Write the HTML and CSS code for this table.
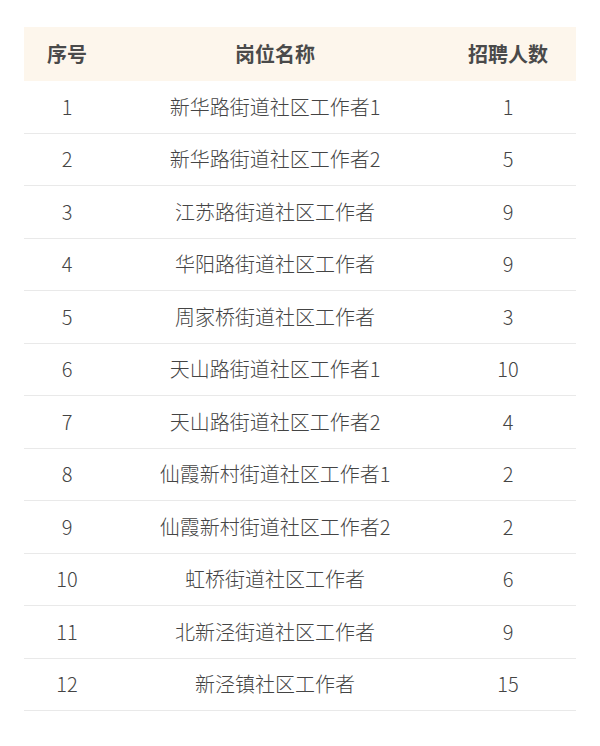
FILE: index.html
```html
<!DOCTYPE html>
<html lang="zh-CN">
<head>
<meta charset="utf-8">
<link rel="stylesheet" href="styles.css">
</head>
<body>
<table class="jobs">
  <colgroup>
    <col class="c-no">
    <col class="c-name">
    <col class="c-count">
  </colgroup>
  <thead>
    <tr><th>序号</th><th>岗位名称</th><th>招聘人数</th></tr>
  </thead>
  <tbody>
    <tr><td>1</td><td>新华路街道社区工作者1</td><td>1</td></tr>
    <tr><td>2</td><td>新华路街道社区工作者2</td><td>5</td></tr>
    <tr><td>3</td><td>江苏路街道社区工作者</td><td>9</td></tr>
    <tr><td>4</td><td>华阳路街道社区工作者</td><td>9</td></tr>
    <tr><td>5</td><td>周家桥街道社区工作者</td><td>3</td></tr>
    <tr><td>6</td><td>天山路街道社区工作者1</td><td>10</td></tr>
    <tr><td>7</td><td>天山路街道社区工作者2</td><td>4</td></tr>
    <tr><td>8</td><td>仙霞新村街道社区工作者1</td><td>2</td></tr>
    <tr><td>9</td><td>仙霞新村街道社区工作者2</td><td>2</td></tr>
    <tr><td>10</td><td>虹桥街道社区工作者</td><td>6</td></tr>
    <tr><td>11</td><td>北新泾街道社区工作者</td><td>9</td></tr>
    <tr><td>12</td><td>新泾镇社区工作者</td><td>15</td></tr>
  </tbody>
</table>
</body>
</html>
```
FILE: styles.css
```css
html, body {
  margin: 0;
  padding: 0;
  background: #ffffff;
}
body {
  padding: 27px 24px 0;
  font-family: "Noto Sans CJK SC", "Noto Sans", sans-serif;
  color: #444444;
}
.jobs {
  width: 552px;
  border-collapse: collapse;
  table-layout: fixed;
}
.c-no { width: 86px; }
.c-name { width: 330px; }
.c-count { width: 136px; }
.jobs th, .jobs td {
  padding: 0;
  text-align: center;
  font-size: 20px;
  line-height: 24px;
}
.jobs th {
  height: 54px;
  background: #fdf6ec;
  font-weight: 700;
  color: #4a4a4a;
}
.jobs td {
  height: 51.5px;
  font-weight: 300;
  border-bottom: 1px solid #e9e9e9;
}
```
